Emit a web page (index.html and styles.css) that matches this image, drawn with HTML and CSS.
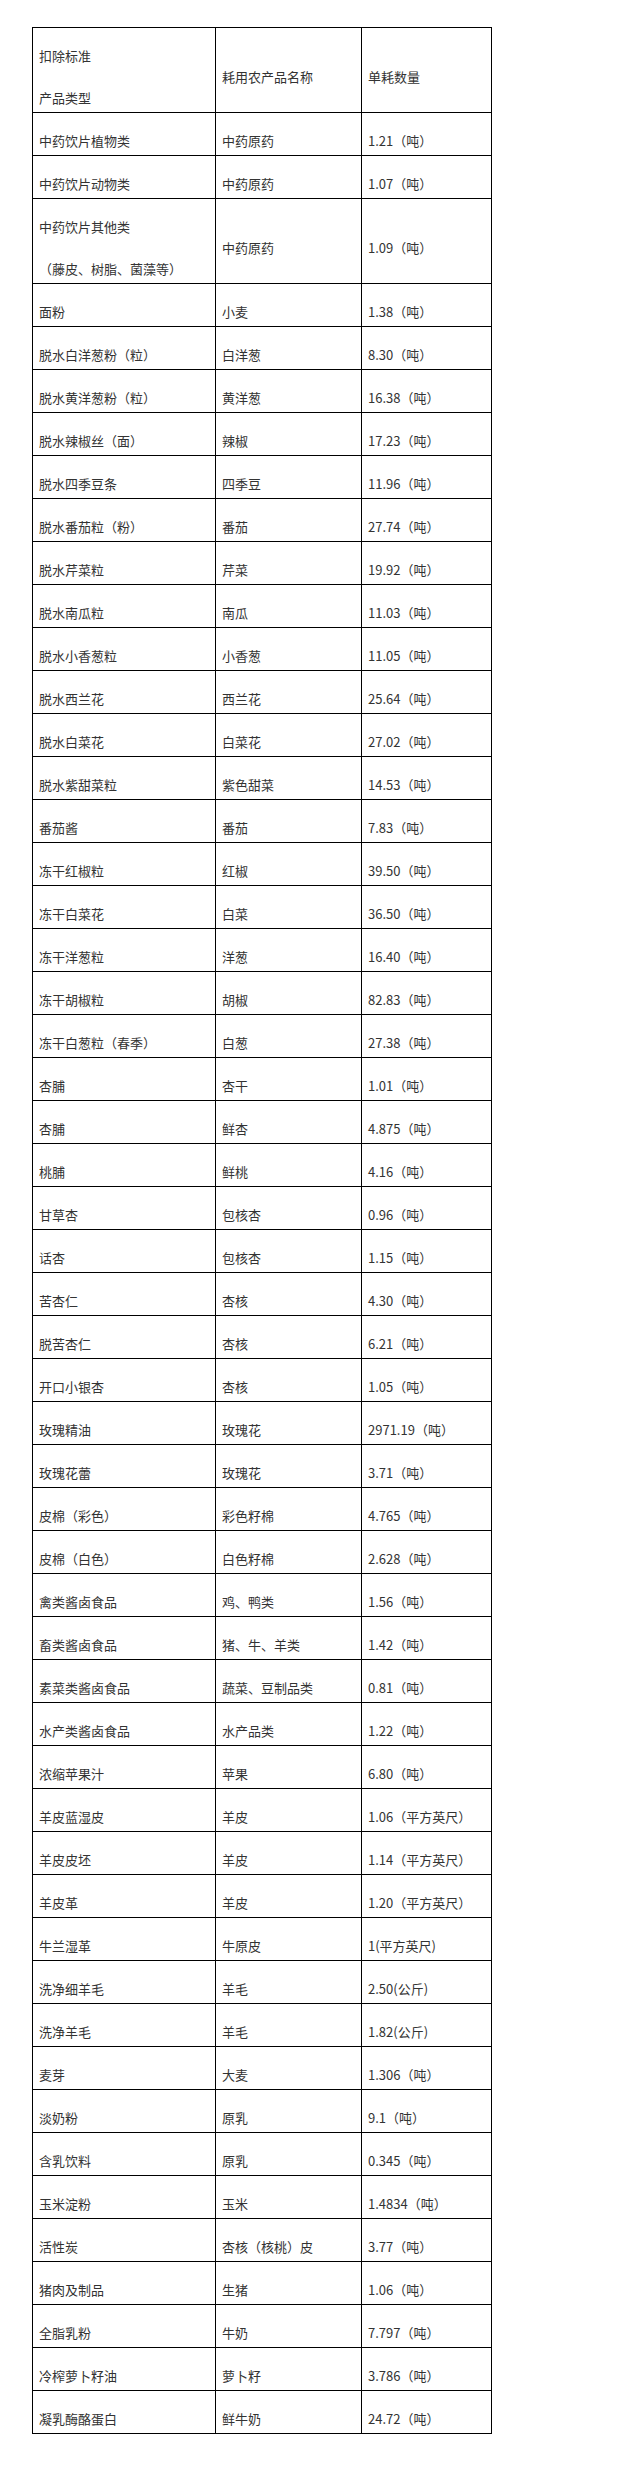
FILE: index.html
```html
<!DOCTYPE html>
<html lang="zh-CN">
<head>
<meta charset="utf-8">
<title>扣除标准</title>
<link rel="stylesheet" href="styles.css">
</head>
<body>
<div class="page">
<table class="std">
<colgroup><col class="c1"><col class="c2"><col class="c3"></colgroup>
<tbody>
<tr><td><p>扣除标准</p><p>产品类型</p></td><td><p>耗用农产品名称</p></td><td><p>单耗数量</p></td></tr>
<tr><td><p>中药饮片植物类</p></td><td><p>中药原药</p></td><td><p>1.21（吨）</p></td></tr>
<tr><td><p>中药饮片动物类</p></td><td><p>中药原药</p></td><td><p>1.07（吨）</p></td></tr>
<tr><td><p>中药饮片其他类</p><p>（藤皮、树脂、菌藻等）</p></td><td><p>中药原药</p></td><td><p>1.09（吨）</p></td></tr>
<tr><td><p>面粉</p></td><td><p>小麦</p></td><td><p>1.38（吨）</p></td></tr>
<tr><td><p>脱水白洋葱粉（粒）</p></td><td><p>白洋葱</p></td><td><p>8.30（吨）</p></td></tr>
<tr><td><p>脱水黄洋葱粉（粒）</p></td><td><p>黄洋葱</p></td><td><p>16.38（吨）</p></td></tr>
<tr><td><p>脱水辣椒丝（面）</p></td><td><p>辣椒</p></td><td><p>17.23（吨）</p></td></tr>
<tr><td><p>脱水四季豆条</p></td><td><p>四季豆</p></td><td><p>11.96（吨）</p></td></tr>
<tr><td><p>脱水番茄粒（粉）</p></td><td><p>番茄</p></td><td><p>27.74（吨）</p></td></tr>
<tr><td><p>脱水芹菜粒</p></td><td><p>芹菜</p></td><td><p>19.92（吨）</p></td></tr>
<tr><td><p>脱水南瓜粒</p></td><td><p>南瓜</p></td><td><p>11.03（吨）</p></td></tr>
<tr><td><p>脱水小香葱粒</p></td><td><p>小香葱</p></td><td><p>11.05（吨）</p></td></tr>
<tr><td><p>脱水西兰花</p></td><td><p>西兰花</p></td><td><p>25.64（吨）</p></td></tr>
<tr><td><p>脱水白菜花</p></td><td><p>白菜花</p></td><td><p>27.02（吨）</p></td></tr>
<tr><td><p>脱水紫甜菜粒</p></td><td><p>紫色甜菜</p></td><td><p>14.53（吨）</p></td></tr>
<tr><td><p>番茄酱</p></td><td><p>番茄</p></td><td><p>7.83（吨）</p></td></tr>
<tr><td><p>冻干红椒粒</p></td><td><p>红椒</p></td><td><p>39.50（吨）</p></td></tr>
<tr><td><p>冻干白菜花</p></td><td><p>白菜</p></td><td><p>36.50（吨）</p></td></tr>
<tr><td><p>冻干洋葱粒</p></td><td><p>洋葱</p></td><td><p>16.40（吨）</p></td></tr>
<tr><td><p>冻干胡椒粒</p></td><td><p>胡椒</p></td><td><p>82.83（吨）</p></td></tr>
<tr><td><p>冻干白葱粒（春季）</p></td><td><p>白葱</p></td><td><p>27.38（吨）</p></td></tr>
<tr><td><p>杏脯</p></td><td><p>杏干</p></td><td><p>1.01（吨）</p></td></tr>
<tr><td><p>杏脯</p></td><td><p>鲜杏</p></td><td><p>4.875（吨）</p></td></tr>
<tr><td><p>桃脯</p></td><td><p>鲜桃</p></td><td><p>4.16（吨）</p></td></tr>
<tr><td><p>甘草杏</p></td><td><p>包核杏</p></td><td><p>0.96（吨）</p></td></tr>
<tr><td><p>话杏</p></td><td><p>包核杏</p></td><td><p>1.15（吨）</p></td></tr>
<tr><td><p>苦杏仁</p></td><td><p>杏核</p></td><td><p>4.30（吨）</p></td></tr>
<tr><td><p>脱苦杏仁</p></td><td><p>杏核</p></td><td><p>6.21（吨）</p></td></tr>
<tr><td><p>开口小银杏</p></td><td><p>杏核</p></td><td><p>1.05（吨）</p></td></tr>
<tr><td><p>玫瑰精油</p></td><td><p>玫瑰花</p></td><td><p>2971.19（吨）</p></td></tr>
<tr><td><p>玫瑰花蕾</p></td><td><p>玫瑰花</p></td><td><p>3.71（吨）</p></td></tr>
<tr><td><p>皮棉（彩色）</p></td><td><p>彩色籽棉</p></td><td><p>4.765（吨）</p></td></tr>
<tr><td><p>皮棉（白色）</p></td><td><p>白色籽棉</p></td><td><p>2.628（吨）</p></td></tr>
<tr><td><p>禽类酱卤食品</p></td><td><p>鸡、鸭类</p></td><td><p>1.56（吨）</p></td></tr>
<tr><td><p>畜类酱卤食品</p></td><td><p>猪、牛、羊类</p></td><td><p>1.42（吨）</p></td></tr>
<tr><td><p>素菜类酱卤食品</p></td><td><p>蔬菜、豆制品类</p></td><td><p>0.81（吨）</p></td></tr>
<tr><td><p>水产类酱卤食品</p></td><td><p>水产品类</p></td><td><p>1.22（吨）</p></td></tr>
<tr><td><p>浓缩苹果汁</p></td><td><p>苹果</p></td><td><p>6.80（吨）</p></td></tr>
<tr><td><p>羊皮蓝湿皮</p></td><td><p>羊皮</p></td><td><p>1.06（平方英尺）</p></td></tr>
<tr><td><p>羊皮皮坯</p></td><td><p>羊皮</p></td><td><p>1.14（平方英尺）</p></td></tr>
<tr><td><p>羊皮革</p></td><td><p>羊皮</p></td><td><p>1.20（平方英尺）</p></td></tr>
<tr><td><p>牛兰湿革</p></td><td><p>牛原皮</p></td><td><p>1(平方英尺)</p></td></tr>
<tr><td><p>洗净细羊毛</p></td><td><p>羊毛</p></td><td><p>2.50(公斤)</p></td></tr>
<tr><td><p>洗净羊毛</p></td><td><p>羊毛</p></td><td><p>1.82(公斤)</p></td></tr>
<tr><td><p>麦芽</p></td><td><p>大麦</p></td><td><p>1.306（吨）</p></td></tr>
<tr><td><p>淡奶粉</p></td><td><p>原乳</p></td><td><p>9.1（吨）</p></td></tr>
<tr><td><p>含乳饮料</p></td><td><p>原乳</p></td><td><p>0.345（吨）</p></td></tr>
<tr><td><p>玉米淀粉</p></td><td><p>玉米</p></td><td><p>1.4834（吨）</p></td></tr>
<tr><td><p>活性炭</p></td><td><p>杏核（核桃）皮</p></td><td><p>3.77（吨）</p></td></tr>
<tr><td><p>猪肉及制品</p></td><td><p>生猪</p></td><td><p>1.06（吨）</p></td></tr>
<tr><td><p>全脂乳粉</p></td><td><p>牛奶</p></td><td><p>7.797（吨）</p></td></tr>
<tr><td><p>冷榨萝卜籽油</p></td><td><p>萝卜籽</p></td><td><p>3.786（吨）</p></td></tr>
<tr><td><p>凝乳酶酪蛋白</p></td><td><p>鲜牛奶</p></td><td><p>24.72（吨）</p></td></tr>
</tbody>
</table>
</div>
</body>
</html>
```
FILE: styles.css
```css
html, body {
  margin: 0;
  padding: 0;
  background: #fff;
}
.page {
  padding: 27px 0 0 32px;
}
.std {
  border-collapse: collapse;
  table-layout: fixed;
  width: 459px;
  font-family: "Noto Sans CJK SC", "Microsoft YaHei", sans-serif;
  font-size: 13px;
  color: #333;
}
.c1 { width: 183px; }
.c2 { width: 146px; }
.c3 { width: 130px; }
.std td {
  border: 1px solid #000;
  padding: 0 6px;
  vertical-align: middle;
  white-space: nowrap;
}
.std p {
  margin: 14px 0 0;
  line-height: 28px;
}
```
